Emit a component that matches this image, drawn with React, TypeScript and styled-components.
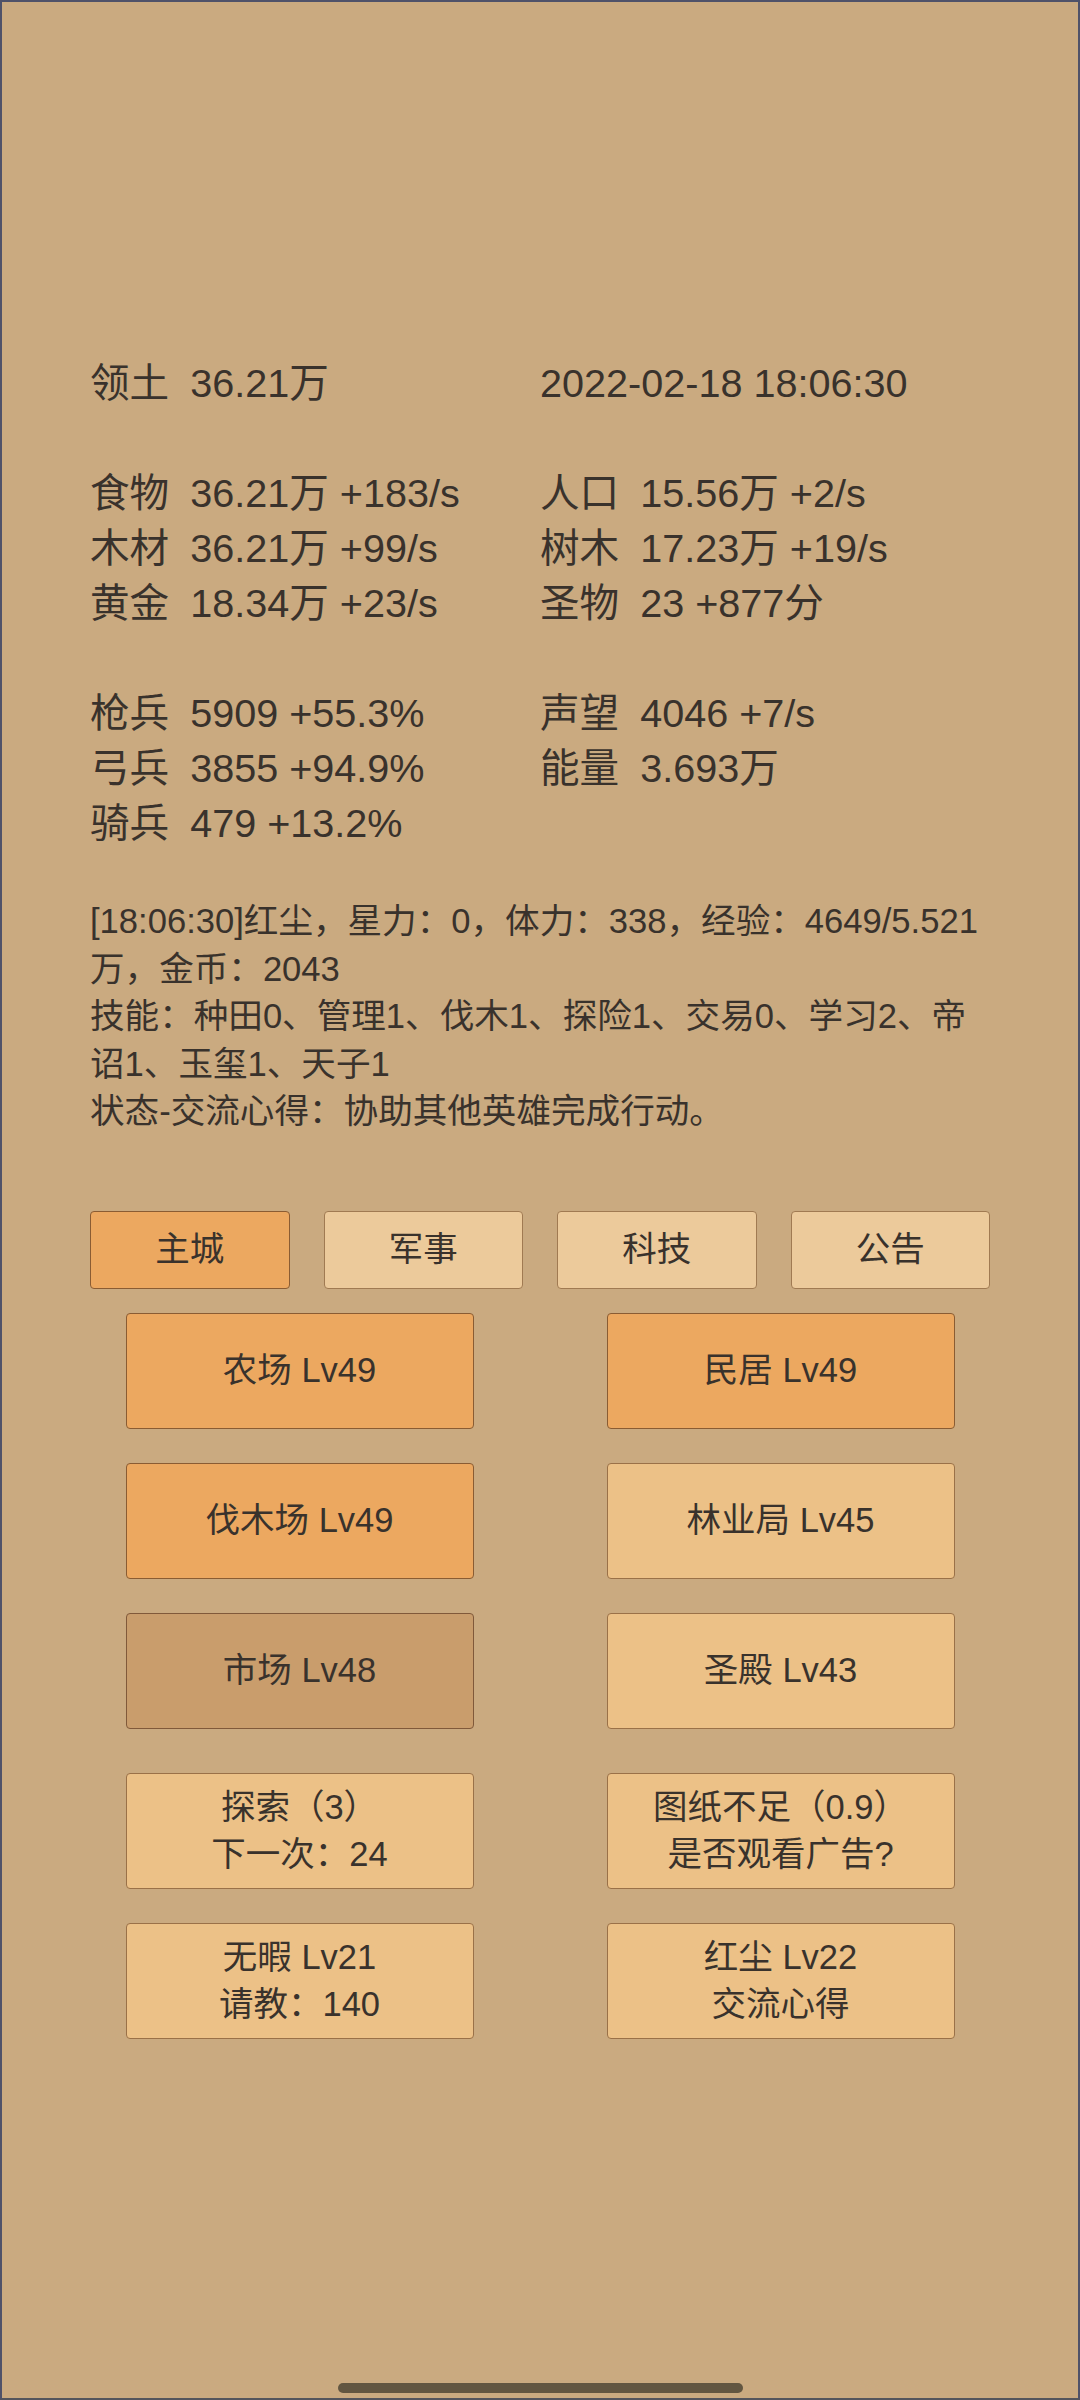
import React from "react";
import styled, { createGlobalStyle } from "styled-components";

type Tone = "active" | "light" | "muted" | "pale";

type Cell = { label?: string; value: string } | null;

const statGroups: Cell[][][] = [
  [[{ label: "领土", value: "36.21万" }, { value: "2022-02-18 18:06:30" }]],
  [
    [{ label: "食物", value: "36.21万 +183/s" }, { label: "人口", value: "15.56万 +2/s" }],
    [{ label: "木材", value: "36.21万 +99/s" }, { label: "树木", value: "17.23万 +19/s" }],
    [{ label: "黄金", value: "18.34万 +23/s" }, { label: "圣物", value: "23 +877分" }],
  ],
  [
    [{ label: "枪兵", value: "5909 +55.3%" }, { label: "声望", value: "4046 +7/s" }],
    [{ label: "弓兵", value: "3855 +94.9%" }, { label: "能量", value: "3.693万" }],
    [{ label: "骑兵", value: "479 +13.2%" }, null],
  ],
];

const logLines = [
  "[18:06:30]红尘，星力：0，体力：338，经验：4649/5.521万，金币：2043",
  "技能：种田0、管理1、伐木1、探险1、交易0、学习2、帝诏1、玉玺1、天子1",
  "状态-交流心得：协助其他英雄完成行动。",
];

const tabs = [
  { name: "主城", active: true },
  { name: "军事", active: false },
  { name: "科技", active: false },
  { name: "公告", active: false },
];

const buildings: { lines: string[]; tone: Tone }[] = [
  { lines: ["农场 Lv49"], tone: "active" },
  { lines: ["民居 Lv49"], tone: "active" },
  { lines: ["伐木场 Lv49"], tone: "active" },
  { lines: ["林业局 Lv45"], tone: "light" },
  { lines: ["市场 Lv48"], tone: "muted" },
  { lines: ["圣殿 Lv43"], tone: "light" },
];

const actions: { lines: string[]; tone: Tone }[] = [
  { lines: ["探索（3）", "下一次：24"], tone: "light" },
  { lines: ["图纸不足（0.9）", "是否观看广告?"], tone: "light" },
  { lines: ["无暇 Lv21", "请教：140"], tone: "light" },
  { lines: ["红尘 Lv22", "交流心得"], tone: "light" },
];

const fills: Record<Tone, { bg: string; border: string }> = {
  active: { bg: "#eca860", border: "#8a5c33" },
  light: { bg: "#ecc187", border: "#9a7148" },
  muted: { bg: "#c99d6c", border: "#80593a" },
  pale: { bg: "#ecca9b", border: "#a07a52" },
};

export default function App() {
  return (
    <>
      <GlobalStyle />
      <Screen>
        <Stats>
          {statGroups.map((group, gi) => (
            <StatGroup key={gi}>
              {group.map((row, ri) => (
                <StatRow key={ri}>
                  {row.map((cell, ci) => (
                    <StatCell key={ci}>
                      {cell?.label && <StatLabel>{cell.label}</StatLabel>}
                      {cell?.value}
                    </StatCell>
                  ))}
                </StatRow>
              ))}
            </StatGroup>
          ))}
        </Stats>

        <Log>
          {logLines.map(line => (
            <p key={line}>{line}</p>
          ))}
        </Log>

        <TabBar>
          {tabs.map(t => (
            <Tile key={t.name} $tone={t.active ? "active" : "pale"} $height={78}>
              {t.name}
            </Tile>
          ))}
        </TabBar>

        <TileGrid>
          {buildings.map(b => (
            <Tile key={b.lines[0]} $tone={b.tone} $height={116}>
              {b.lines[0]}
            </Tile>
          ))}
        </TileGrid>

        <TileGrid $spaced>
          {actions.map(a => (
            <Tile key={a.lines[0]} $tone={a.tone} $height={116}>
              {a.lines.map(l => (
                <span key={l}>{l}</span>
              ))}
            </Tile>
          ))}
        </TileGrid>

        <HomeBar />
      </Screen>
    </>
  );
}

const GlobalStyle = createGlobalStyle`
  html, body {
    margin: 0;
    padding: 0;
    background: #caaa80;
  }

  body {
    font-family: "Liberation Sans", "Noto Sans CJK SC", sans-serif;
    color: #39322c;
  }

  * {
    box-sizing: border-box;
  }
`;

const Screen = styled.div`
  width: 1080px;
  min-height: 2400px;
  display: flex;
  flex-direction: column;
  padding: 0 88px;
  background: #caaa80;
  border: 2px solid #4f5269;
  border-bottom-color: #54555c;
`;

const Stats = styled.div`
  margin-top: 354px;
  display: flex;
  flex-direction: column;
  gap: 55px;
`;

const StatGroup = styled.div`
  display: flex;
  flex-direction: column;
`;

const StatRow = styled.div`
  display: grid;
  grid-template-columns: 450px 450px;
  font-size: 39.6px;
  line-height: 55px;
  white-space: nowrap;
`;

const StatCell = styled.div`
  display: flex;
`;

const StatLabel = styled.span`
  margin-right: 21px;
`;

const Log = styled.div`
  margin-top: 47px;
  font-size: 34.6px;
  line-height: 47.5px;

  p {
    margin: 0;
  }
`;

const TabBar = styled.div`
  margin-top: 75px;
  display: grid;
  grid-template-columns: repeat(4, 1fr);
  gap: 34px;
`;

const TileGrid = styled.div<{ $spaced?: boolean }>`
  margin-top: ${p => (p.$spaced ? 44 : 24)}px;
  display: grid;
  grid-template-columns: 348px 348px;
  justify-content: center;
  column-gap: 133px;
  row-gap: 34px;
`;

const Tile = styled.div<{ $tone: Tone; $height: number }>`
  height: ${p => p.$height}px;
  display: flex;
  flex-direction: column;
  align-items: center;
  justify-content: center;
  background: ${p => fills[p.$tone].bg};
  border: 1px solid ${p => fills[p.$tone].border};
  border-radius: 4px;
  font-size: 34.5px;
  line-height: 47px;
  text-align: center;
  white-space: nowrap;
`;

const HomeBar = styled.div`
  margin: auto auto 5px;
  width: 405px;
  height: 10px;
  border-radius: 5px;
  background: #625641;
`;
